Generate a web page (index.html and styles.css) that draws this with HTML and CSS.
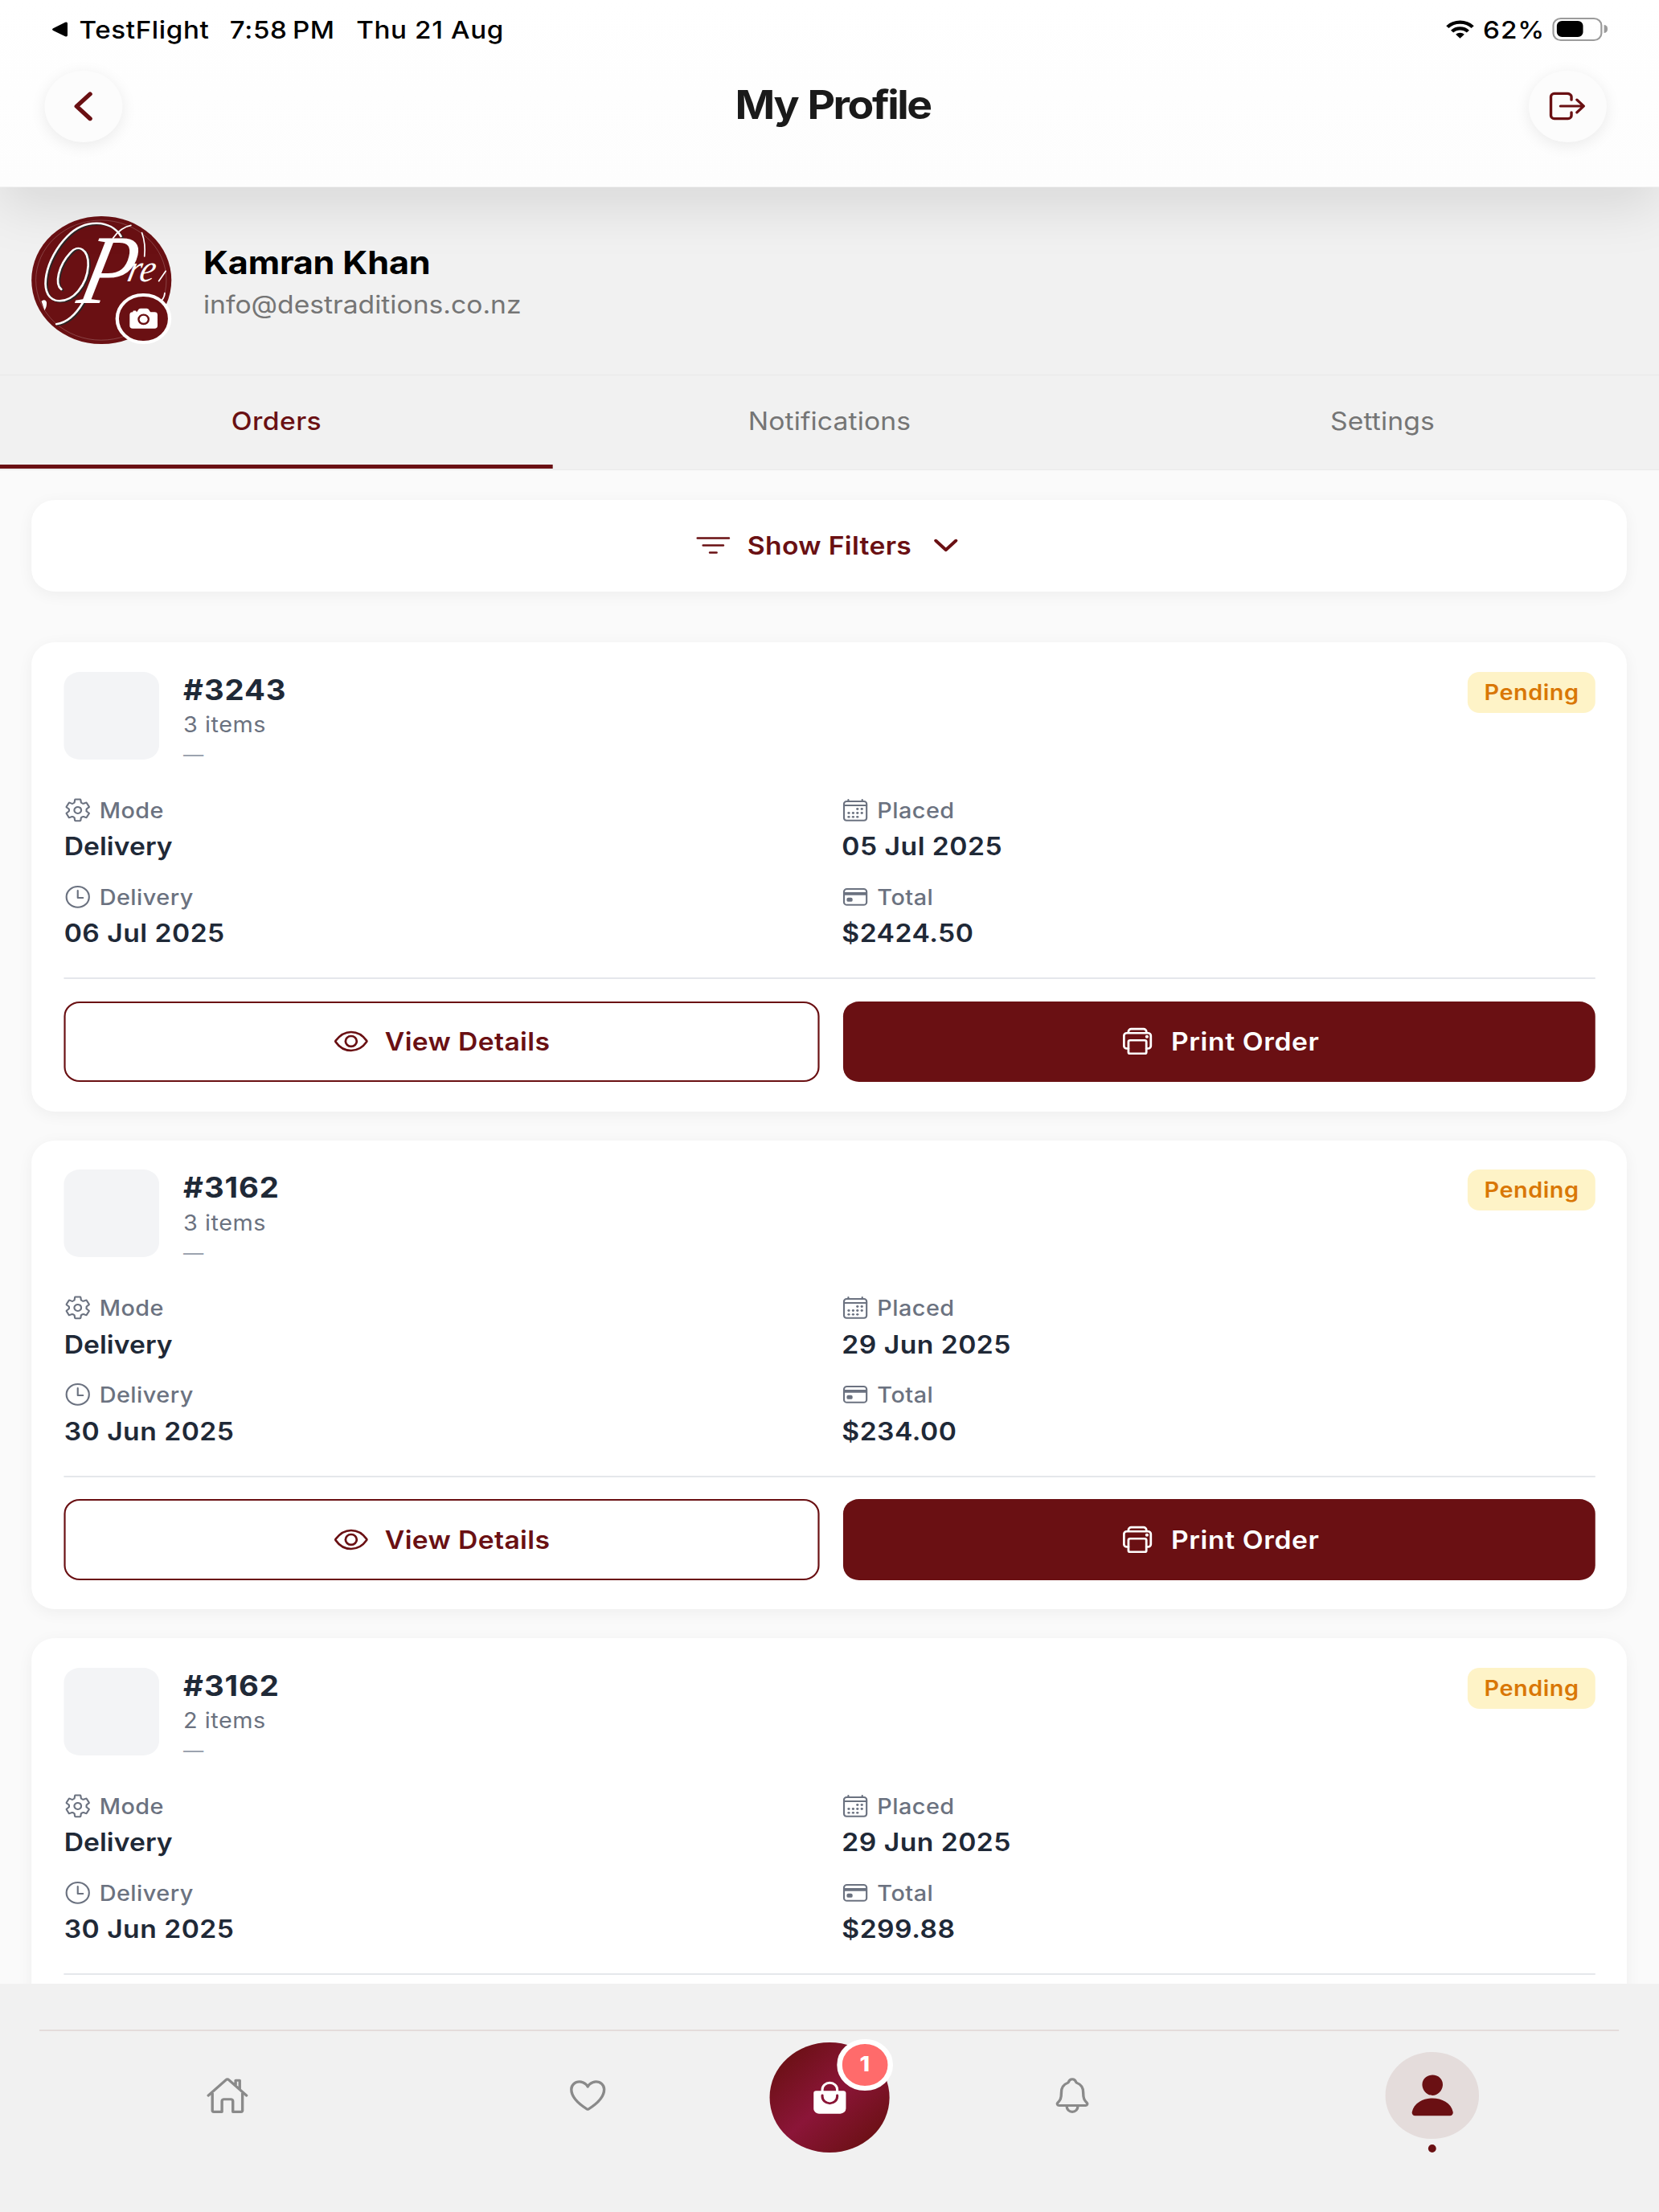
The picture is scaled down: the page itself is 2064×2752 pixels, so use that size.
FILE: index.html
```html
<!DOCTYPE html>
<html lang="en">
<head>
<meta charset="utf-8">
<title>My Profile</title>
<link rel="stylesheet" href="styles.css">
</head>
<body>
<svg class="sprite" aria-hidden="true">
  <symbol id="i-cog" viewBox="0 0 512 512"><path d="M262.29 192.31a64 64 0 1057.4 57.4 64.13 64.13 0 00-57.4-57.4zM416.39 256a154.34 154.34 0 01-1.53 20.79l45.21 35.46a10.81 10.81 0 012.45 13.75l-42.77 74a10.81 10.81 0 01-13.14 4.59l-44.9-18.08a16.11 16.11 0 00-15.17 1.75A164.48 164.48 0 01325 400.8a15.94 15.94 0 00-8.82 12.14l-6.73 47.89a11.08 11.08 0 01-10.68 9.17h-85.54a11.11 11.11 0 01-10.69-8.87l-6.72-47.82a16.07 16.07 0 00-9-12.22 155.3 155.3 0 01-21.46-12.57 16 16 0 00-15.11-1.71l-44.89 18.07a10.81 10.81 0 01-13.14-4.58l-42.77-74a10.8 10.8 0 012.45-13.75l38.21-30a16.05 16.05 0 006-14.08c-.36-4.17-.58-8.33-.58-12.5s.21-8.27.58-12.35a16 16 0 00-6.07-13.94l-38.19-30A10.81 10.81 0 0149.48 186l42.77-74a10.81 10.81 0 0113.14-4.59l44.9 18.08a16.11 16.11 0 0015.17-1.75A164.48 164.48 0 01187 111.2a15.94 15.94 0 008.82-12.14l6.73-47.89A11.08 11.08 0 01213.23 42h85.54a11.11 11.11 0 0110.69 8.87l6.72 47.82a16.07 16.07 0 009 12.22 155.3 155.3 0 0121.46 12.57 16 16 0 0015.11 1.71l44.89-18.07a10.81 10.81 0 0113.14 4.58l42.77 74a10.8 10.8 0 01-2.45 13.75l-38.21 30a16.05 16.05 0 00-6.05 14.08c.33 4.14.55 8.3.55 12.47z"/></symbol>
  <symbol id="i-calendar" viewBox="0 0 512 512"><rect x="48" y="80" width="416" height="384" rx="48"/><path d="M128 48v32M384 48v32M464 160H48"/><g class="solid"><circle cx="296" cy="232" r="24"/><circle cx="376" cy="232" r="24"/><circle cx="296" cy="312" r="24"/><circle cx="376" cy="312" r="24"/><circle cx="136" cy="312" r="24"/><circle cx="216" cy="312" r="24"/><circle cx="136" cy="392" r="24"/><circle cx="216" cy="392" r="24"/><circle cx="296" cy="392" r="24"/></g></symbol>
  <symbol id="i-clock" viewBox="0 0 512 512"><circle cx="256" cy="256" r="208"/><path d="M256 128v144h96"/></symbol>
  <symbol id="i-card" viewBox="0 0 512 512"><rect x="48" y="96" width="416" height="320" rx="56"/><path d="M48 192h416M128 300h48v20h-48z" stroke-width="60" stroke-linecap="butt"/></symbol>
  <symbol id="i-eye" viewBox="0 0 512 512"><path d="M255.66 112c-77.94 0-157.89 45.11-220.83 135.33a16 16 0 00-.27 17.77C82.92 340.8 161.8 400 255.66 400c92.84 0 173.34-59.38 221.79-135.25a16.14 16.14 0 000-17.47C428.89 172.28 347.8 112 255.66 112z"/><circle cx="256" cy="256" r="80"/></symbol>
  <symbol id="i-print" viewBox="0 0 512 512"><path d="M384 368h24a40.12 40.12 0 0040-40V168a40.12 40.12 0 00-40-40H104a40.12 40.12 0 00-40 40v160a40.12 40.12 0 0040 40h24M384 128v-24a40.12 40.12 0 00-40-40H168a40.12 40.12 0 00-40 40v24"/><rect x="128" y="240" width="256" height="208" rx="24"/><circle class="solid" cx="392" cy="184" r="24"/></symbol>
</svg>

<div class="screen">
  <header class="header">
    <div class="status">
      <svg class="status-back" viewBox="0 0 20 20"><path d="M2.2 8.6 16.6.9Q19.4-.2 19.4 2.6V17.4q0 2.8-2.8 1.7L2.2 11.4Q0 10 2.2 8.6z"/></svg>
      <span class="st-app">TestFlight</span>
      <span class="st-time">7:58&#8201;PM</span>
      <span class="st-date">Thu 21 Aug</span>
      <svg class="wifi" viewBox="0 0 34 24"><g fill="none" stroke="#000" stroke-width="4.4"><path d="M1.8 9.1a21.6 21.6 0 0 1 30.4 0"/><path d="M7.4 14.9a13.6 13.6 0 0 1 19.2 0"/></g><path d="M17 24l-5.2-5.2a7.4 7.4 0 0 1 10.4 0z"/></svg>
      <span class="st-charge">62%</span>
      <span class="battery"><i></i></span><span class="battery-tip"></span>
    </div>
    <div class="title-row">
      <a class="round"><svg class="icon back" viewBox="0 0 512 512"><path d="M328 112L184 256l144 144"/></svg></a>
      <h1>My Profile</h1>
      <a class="round"><svg class="icon logout" viewBox="0 0 512 512"><path d="M304 336v40a40 40 0 01-40 40H104a40 40 0 01-40-40V136a40 40 0 0140-40h152c22.09 0 48 17.91 48 40v40M368 336l80-80-80-80M176 256h256"/></svg></a>
    </div>
  </header>

  <section class="profile">
    <div class="avatar">
      <svg viewBox="0 0 70 70">
        <circle class="ring" cx="35" cy="35" r="32.8"/>
        <g class="swash-shade" transform="translate(.7 .5)"><path d="M45 11C40 2 27 1 18 11 7 23 3 43 12 46c9 2 16-9 16.500-19 .3-9-5-12-9-7-6 7-8 17-4.500 20"/><path d="M26 47Q20 58 12.500 59"/></g>
        <g class="swash"><path d="M45 11C40 2 27 1 18 11 7 23 3 43 12 46c9 2 16-9 16.500-19 .3-9-5-12-9-7-6 7-8 17-4.500 20"/><path d="M26 47Q20 58 12.500 59"/><path class="fine" d="M41 12Q45 6 50 5M55.500 9q2 6 1.300 13M67.500 30l-3.500 5.500M67 42q0 2-1.500 4"/></g>
        <path class="drop" d="M5 46.500q2-1.500 2.600.5.300 2-1 4.500z"/>
        <text class="logo" transform="translate(22 47.500) skewX(-12) scale(.82 1)"><tspan class="logo-big">P</tspan><tspan class="logo-small" dx="-5" dy="-12">re</tspan></text>
      </svg>
      <span class="camera"><svg viewBox="0 0 512 512"><circle cx="256" cy="272" r="64"/><path d="M432 144h-59c-3 0-6.720-1.940-9.620-5l-25.940-40.940a15.520 15.520 0 00-1.370-1.850C327.110 85.760 315 80 302 80h-92c-13 0-25.110 5.760-34.070 16.210a15.520 15.520 0 00-1.370 1.850l-25.940 41c-2.220 2.420-5.340 5-8.620 5v-8a16 16 0 00-16-16h-24a16 16 0 00-16 16v8H80a48.050 48.050 0 00-48 48V384a48.050 48.050 0 0048 48h352a48.050 48.050 0 0048-48V192a48.050 48.050 0 00-48-48zM256 368a96 96 0 1196-96 96.110 96.110 0 01-96 96z"/></svg></span>
    </div>
    <div class="who">
      <div class="name">Kamran Khan</div>
      <div class="email">info@destraditions.co.nz</div>
    </div>
  </section>

  <nav class="tabs">
    <a class="tab active"><span>Orders</span></a>
    <a class="tab"><span>Notifications</span></a>
    <a class="tab"><span>Settings</span></a>
  </nav>

  <main class="content">
    <div class="filters">
      <svg class="icon" viewBox="0 0 512 512"><path d="M32 144h448M112 256h288M208 368h96"/></svg>
      <span>Show Filters</span>
      <svg class="icon chevron" viewBox="0 0 512 512"><path d="M112 184l144 144 144-144"/></svg>
    </div>

    <article class="card">
      <div class="head">
        <div class="thumb"></div>
        <div class="summary"><div class="number">#3243</div><div class="items">3 items</div><div class="note">—</div></div>
        <span class="badge">Pending</span>
      </div>
      <div class="meta">
        <div><div class="label"><svg class="icon"><use href="#i-cog"/></svg><span>Mode</span></div><div class="value word">Delivery</div></div>
        <div><div class="label"><svg class="icon"><use href="#i-calendar"/></svg><span>Placed</span></div><div class="value">05 Jul 2025</div></div>
        <div><div class="label"><svg class="icon"><use href="#i-clock"/></svg><span>Delivery</span></div><div class="value">06 Jul 2025</div></div>
        <div><div class="label"><svg class="icon"><use href="#i-card"/></svg><span>Total</span></div><div class="value">$2424.50</div></div>
      </div>
      <div class="actions">
        <a class="btn outline"><svg class="icon"><use href="#i-eye"/></svg><span>View Details</span></a>
        <a class="btn filled"><svg class="icon"><use href="#i-print"/></svg><span>Print Order</span></a>
      </div>
    </article>

    <article class="card">
      <div class="head">
        <div class="thumb"></div>
        <div class="summary"><div class="number">#3162</div><div class="items">3 items</div><div class="note">—</div></div>
        <span class="badge">Pending</span>
      </div>
      <div class="meta">
        <div><div class="label"><svg class="icon"><use href="#i-cog"/></svg><span>Mode</span></div><div class="value word">Delivery</div></div>
        <div><div class="label"><svg class="icon"><use href="#i-calendar"/></svg><span>Placed</span></div><div class="value">29 Jun 2025</div></div>
        <div><div class="label"><svg class="icon"><use href="#i-clock"/></svg><span>Delivery</span></div><div class="value">30 Jun 2025</div></div>
        <div><div class="label"><svg class="icon"><use href="#i-card"/></svg><span>Total</span></div><div class="value">$234.00</div></div>
      </div>
      <div class="actions">
        <a class="btn outline"><svg class="icon"><use href="#i-eye"/></svg><span>View Details</span></a>
        <a class="btn filled"><svg class="icon"><use href="#i-print"/></svg><span>Print Order</span></a>
      </div>
    </article>

    <article class="card">
      <div class="head">
        <div class="thumb"></div>
        <div class="summary"><div class="number">#3162</div><div class="items">2 items</div><div class="note">—</div></div>
        <span class="badge">Pending</span>
      </div>
      <div class="meta">
        <div><div class="label"><svg class="icon"><use href="#i-cog"/></svg><span>Mode</span></div><div class="value word">Delivery</div></div>
        <div><div class="label"><svg class="icon"><use href="#i-calendar"/></svg><span>Placed</span></div><div class="value">29 Jun 2025</div></div>
        <div><div class="label"><svg class="icon"><use href="#i-clock"/></svg><span>Delivery</span></div><div class="value">30 Jun 2025</div></div>
        <div><div class="label"><svg class="icon"><use href="#i-card"/></svg><span>Total</span></div><div class="value">$299.88</div></div>
      </div>
      <div class="actions"></div>
    </article>
  </main>

  <footer class="dock">
    <div class="dock-row">
      <a class="dock-item"><svg class="icon" viewBox="0 0 512 512"><path d="M80 212v236a16 16 0 0016 16h96V328a24 24 0 0124-24h80a24 24 0 0124 24v136h96a16 16 0 0016-16V212M480 256L266.890 52c-5-5.280-16.690-5.340-21.780 0L32 256M400 179V64h-48v69"/></svg></a>
      <a class="dock-item"><svg class="icon" viewBox="0 0 512 512"><path d="M352.920 80C288 80 256 144 256 144s-32-64-96.920-64c-52.760 0-94.540 44.140-95.080 96.810-1.100 109.330 86.730 187.080 183 252.420a16 16 0 0018 0c96.260-65.340 184.090-143.090 183-252.420-.54-52.670-42.320-96.810-95.080-96.810z"/></svg></a>
      <a class="cart">
        <svg viewBox="0 0 512 512"><path d="M454.650 169.400A31.820 31.820 0 00432 160h-64v-16a112 112 0 00-224 0v16H80a32 32 0 00-32 32v216c0 39 33 72 72 72h272a72.220 72.220 0 0050.480-20.550 69.480 69.480 0 0021.520-50.200V192a31.750 31.750 0 00-9.350-22.600zM176 144a80 80 0 01160 0v16H176zm192 96a112 112 0 01-224 0v-16a16 16 0 0132 0v16a80 80 0 00160 0v-16a16 16 0 0132 0z"/></svg>
        <span class="count">1</span>
      </a>
      <a class="dock-item"><svg class="icon" viewBox="0 0 512 512"><path d="M427.680 351.430C402 320 383.870 304 383.870 217.350 383.870 138 343.350 109.730 310 96c-4.430-1.820-8.600-6-9.950-10.550C294.200 65.540 277.800 48 256 48s-38.210 17.550-44 37.470c-1.350 4.600-5.520 8.710-9.950 10.530-33.390 13.750-73.870 41.920-73.870 121.350C128.130 304 110 320 84.320 351.430 73.680 364.450 83 384 101.610 384h308.880c18.510 0 27.770-19.610 17.190-32.570zM320 384v16a64 64 0 01-128 0v-16"/></svg></a>
      <a class="dock-item"><span class="bubble"><svg viewBox="0 0 512 512"><path d="M332.640 64.580C313.180 43.570 286 32 256 32c-30.160 0-57.430 11.500-76.800 32.380-19.580 21.110-29.120 49.800-26.880 80.780C156.760 206.280 203.270 256 256 256s99.160-49.710 103.670-110.820c2.270-30.700-7.330-59.330-27.030-80.600zM432 480H80a31 31 0 01-24.200-11.130c-6.500-7.770-9.120-18.380-7.180-29.110C57.060 392.940 83.400 353.610 124.800 326c36.780-24.510 83.370-38 131.200-38s94.420 13.500 131.200 38c41.400 27.600 67.740 66.930 76.180 113.750 1.940 10.730-.68 21.340-7.180 29.110A31 31 0 01432 480z"/></svg></span></a>
    </div>
  </footer>
</div>
</body>
</html>
```
FILE: styles.css
```css
:root {
  --brand: #6a1013;
  --ink: #1f2937;
  --muted: #6b7280;
}

/* 1rem = ten layout points of the 834 x 1210 canvas */
html { font-size: 22.744px; }

* { box-sizing: border-box; }

body {
  margin: 0;
  overflow: hidden;
  background: #fafafa;
  font-family: Inter, "Liberation Sans", sans-serif;
}

.sprite { display: none; }

/* the canvas is stretched sideways to fill the window */
.screen {
  display: flex;
  flex-direction: column;
  width: 83.4rem;
  height: 2752px;
  overflow: hidden;
  transform: scaleX(1.08812);
  transform-origin: 0 0;
  background: #fafafa;
}

svg { display: block; flex: none; }

.icon {
  fill: none;
  stroke: currentColor;
  stroke-width: 32px;
  stroke-linecap: round;
  stroke-linejoin: round;
}
.solid { fill: currentColor; stroke: none; }

/* header */
.header {
  position: relative;
  z-index: 2;
  flex: none;
  height: 10.24rem;
  background: linear-gradient(#fff, #fdfdfd);
  border-bottom: 1px solid #f3f3f3;
  box-shadow: 0 25px 60px rgba(0, 0, 0, .1);
}

.status {
  display: flex;
  align-items: center;
  height: 3.18rem;
  padding: 0 2.6rem 0 2.56rem;
  font-size: 1.34rem;
  font-weight: 500;
  letter-spacing: .019em;
  color: #000;
  white-space: nowrap;
}
.status-back { width: .9rem; height: .84rem; margin-right: .52rem; }
.st-app { width: 7.57rem; }
.st-time { width: 6.36rem; }
.st-date { flex: 1; }
.wifi { width: 1.44rem; height: 1rem; margin-right: .42rem; }
.st-charge { width: 3.5rem; letter-spacing: .03em; }
.battery {
  width: 2.5rem;
  height: 1.28rem;
  padding: .12rem;
  border: 2px solid #9b9b9b;
  border-radius: .42rem;
}
.battery i { display: block; width: 1.32rem; height: 100%; border-radius: .26rem; background: #000; }
.battery-tip { width: .15rem; height: .46rem; margin-left: .1rem; border-radius: 0 .2rem .2rem 0; background: #9b9b9b; }

.title-row {
  display: flex;
  align-items: center;
  margin-top: .7rem;
  padding: 0 2.65rem 0 2.24rem;
}
.round {
  display: grid;
  place-items: center;
  width: 3.9rem;
  height: 3.89rem;
  border-radius: 50%;
  background: #fcfcfc;
  color: var(--brand);
  box-shadow: 0 4px 18px rgba(0, 0, 0, .08);
}
.back { width: 2.4rem; height: 2.4rem; stroke-width: 48px; }
.logout { width: 2.2rem; height: 2.2rem; }
h1 {
  flex: 1;
  margin: 0;
  padding: 0 0 .2rem .74rem;
  font-size: 2.16rem;
  font-weight: 700;
  letter-spacing: -.046em;
  word-spacing: .04em;
  text-align: center;
  color: #1a1a1a;
}

/* profile */
.profile {
  display: flex;
  flex: none;
  gap: 1.62rem;
  height: 10.28rem;
  padding: 1.6rem;
  background: #f1f1f1;
  border-bottom: 1px solid #e8e8e8;
}
.avatar { position: relative; width: 7rem; height: 7rem; }
.avatar > svg { width: 7rem; height: 7rem; border-radius: 50%; background: var(--brand); }
.ring { fill: none; stroke: #fff; stroke-width: .2; opacity: .45; }
.swash, .swash-shade { fill: none; stroke: #fff; stroke-width: 1.1; stroke-linecap: round; }
.swash-shade { stroke: #2c2626; }
.fine { stroke-width: .7; }
.drop { fill: #fff; }
.logo { fill: #fff; font-family: "Liberation Serif", serif; font-style: italic; }
.logo-big { font-size: 54px; }
.logo-small { font-size: 21px; }
.camera {
  position: absolute;
  right: 0;
  bottom: 0;
  display: grid;
  place-items: center;
  width: 2.8rem;
  height: 2.8rem;
  border: .2rem solid #fff;
  border-radius: 50%;
  background: var(--brand);
}
.camera svg { width: 1.6rem; height: 1.6rem; fill: #fff; }
.name {
  margin-top: 1.55rem;
  font-size: 1.745rem;
  line-height: 2rem;
  font-weight: 700;
  letter-spacing: -.004em;
  color: #000;
  white-space: nowrap;
}
.email { margin-top: .38rem; font-size: 1.36rem; line-height: 1.8rem; color: #757575; }

/* tabs */
.tabs {
  display: flex;
  flex: none;
  height: 5.22rem;
  background: #f1f1f1;
  border-bottom: 1px solid #e9e9e9;
}
.tab {
  display: flex;
  flex: 1;
  align-items: center;
  justify-content: center;
  margin-bottom: .05rem;
  padding-top: .08rem;
  border-bottom: .22rem solid transparent;
  font-size: 1.36rem;
  font-weight: 400;
  letter-spacing: .004em;
  color: #757575;
}
.tab.active { border-color: var(--brand); color: var(--brand); font-weight: 500; letter-spacing: .012em; }

/* orders */
.content { flex: 1; min-height: 0; overflow: hidden; padding: 1.61rem 1.6rem 0; }
.filters, .card {
  border-radius: 1.2rem;
  background: #fff;
  box-shadow: 0 4px 18px rgba(0, 0, 0, .05);
}
.filters {
  display: flex;
  align-items: center;
  justify-content: center;
  height: 5rem;
  margin-bottom: 2.8rem;
  color: var(--brand);
  font-size: 1.36rem;
  font-weight: 600;
  letter-spacing: .01em;
}
.filters .icon { width: 1.8rem; height: 1.8rem; }
.filters span { margin: 0 .8rem; }
.filters .chevron { stroke-width: 48px; }

.card { height: 25.64rem; margin-bottom: 1.6rem; padding: 1.6rem; }
.head { display: flex; align-items: flex-start; height: 5.3rem; }
.thumb { width: 4.8rem; height: 4.8rem; border-radius: .8rem; background: #f3f4f6; }
.summary { flex: 1; padding: .04rem 0 0 1.22rem; }
.number {
  font-size: 1.55rem;
  line-height: 1.96rem;
  font-weight: 700;
  letter-spacing: .023em;
  color: var(--ink);
}
.items { font-size: 1.165rem; line-height: 1.81rem; letter-spacing: .018em; color: var(--muted); }
.note { font-size: 1.02rem; line-height: 1.56rem; color: #9ca3af; }
.badge {
  height: 2.24rem;
  padding: 0 .82rem;
  border-radius: .6rem;
  background: #fef3c7;
  color: #d97706;
  font-size: 1.165rem;
  line-height: 2.24rem;
  font-weight: 600;
  letter-spacing: .019em;
}
.meta {
  display: grid;
  grid-template-columns: 1fr 1fr;
  column-gap: 1.2rem;
  row-gap: 1.094rem;
  margin-top: 1.464rem;
}
.label {
  display: flex;
  align-items: center;
  gap: .4rem;
  height: 1.6rem;
  font-size: 1.165rem;
  font-weight: 500;
  letter-spacing: .016em;
  color: var(--muted);
}
.label .icon { width: 1.4rem; height: 1.4rem; }
.value {
  margin-top: .355rem;
  padding-left: .02rem;
  font-size: 1.36rem;
  line-height: 1.7rem;
  font-weight: 600;
  letter-spacing: .014em;
  color: var(--ink);
}
.word { letter-spacing: .002em; }
.actions {
  display: flex;
  gap: 1.2rem;
  margin-top: 1.572rem;
  padding-top: 1.2rem;
  border-top: .09rem solid #e5e7eb;
}
.btn {
  display: flex;
  flex: 1 1 0;
  align-items: center;
  justify-content: center;
  gap: .8rem;
  height: 4.41rem;
  border-radius: .8rem;
  font-size: 1.36rem;
  font-weight: 600;
  letter-spacing: .011em;
}
.btn .icon { width: 1.8rem; height: 1.8rem; }
.outline { flex-basis: .2rem; border: .1rem solid var(--brand); color: var(--brand); }
.filled { background: var(--brand); color: #fff; letter-spacing: .018em; }

/* dock */
.dock { flex: none; height: 12.5rem; padding-top: 2.5rem; background: #f1f1f1; }
.dock-row {
  position: relative;
  display: flex;
  align-items: center;
  height: 7.2rem;
  padding: .06rem 2.36rem 0 2.4rem;
}
.dock-row::before {
  content: "";
  position: absolute;
  top: 0;
  left: 2rem;
  right: 2rem;
  height: .1rem;
  background: #e4dcdb;
}
.dock-item { display: flex; flex: 1; justify-content: center; color: #8a8a8a; }
.dock-item .icon { width: 2.2rem; height: 2.2rem; }
.cart {
  position: relative;
  display: grid;
  place-items: center;
  width: 6rem;
  height: 6rem;
  margin: .22rem .15rem 0 .11rem;
  border-radius: 50%;
  background: linear-gradient(135deg, #6a1013 10%, #8b1538 50%, #6a1013 90%);
}
.cart svg { width: 2rem; height: 2rem; fill: #fff; }
.count {
  position: absolute;
  top: -.18rem;
  left: 3.37rem;
  width: 2.8rem;
  height: 2.8rem;
  border: .3rem solid #fff;
  border-radius: 50%;
  background: #ff6b6b;
  color: #fff;
  font-size: 1.15rem;
  line-height: 2.2rem;
  font-weight: 800;
  text-align: center;
}
.bubble {
  position: relative;
  display: grid;
  place-items: center;
  width: 4.72rem;
  height: 4.72rem;
  border-radius: 50%;
  background: #e4dcdb;
}
.bubble svg { width: 2.54rem; height: 2.54rem; fill: var(--brand); }
.bubble::after {
  content: "";
  position: absolute;
  top: calc(100% + .32rem);
  width: .42rem;
  height: .44rem;
  border-radius: 50%;
  background: var(--brand);
}
```
